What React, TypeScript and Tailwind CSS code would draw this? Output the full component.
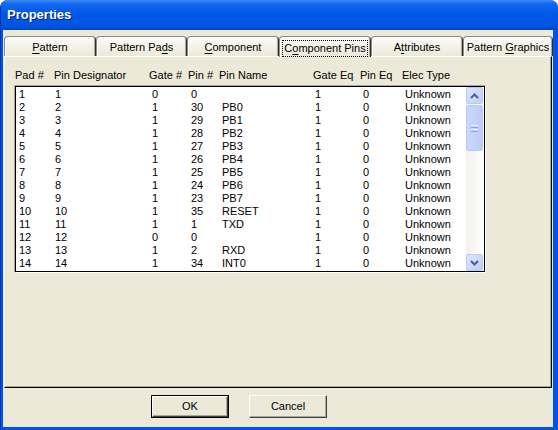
import React from "react";

type Row = [string, string, string, string, string];

const rows: Row[] = [
  ["1", "1", "0", "0", ""],
  ["2", "2", "1", "30", "PB0"],
  ["3", "3", "1", "29", "PB1"],
  ["4", "4", "1", "28", "PB2"],
  ["5", "5", "1", "27", "PB3"],
  ["6", "6", "1", "26", "PB4"],
  ["7", "7", "1", "25", "PB5"],
  ["8", "8", "1", "24", "PB6"],
  ["9", "9", "1", "23", "PB7"],
  ["10", "10", "1", "35", "RESET"],
  ["11", "11", "1", "1", "TXD"],
  ["12", "12", "0", "0", ""],
  ["13", "13", "1", "2", "RXD"],
  ["14", "14", "1", "34", "INT0"],
];

const tabs = [
  { pre: "", key: "P", post: "attern", w: "w-[92px]" },
  { pre: "Pattern Pa", key: "d", post: "s", w: "w-[91px]" },
  { pre: "", key: "C", post: "omponent", w: "w-[92px]" },
  { pre: "C", key: "o", post: "mponent Pins", w: "w-[92px]", active: true },
  { pre: "A", key: "t", post: "tributes", w: "w-[92px]" },
  { pre: "Pattern ", key: "G", post: "raphics", w: "w-[90px]" },
];

const Tab = ({ pre, k, post, w, active }: { pre: string; k: string; post: string; w: string; active?: boolean }) => (
  <div
    className={`${w} h-[20px] flex items-center justify-center pt-[2px] rounded-t-[4px] border border-b-0 border-l-[#8a8a8a] border-t-[#8a8a8a] border-r-[#303030] bg-[linear-gradient(#fbfbf8,#ecE9d8)] shadow-[inset_1px_1px_0_#ffffff,inset_-1px_0_0_#aca899] ${
      active ? "relative z-10 h-[21px] -mb-px" : ""
    }`}
  >
    <span className={active ? "px-[1px] leading-[15px] outline outline-1 outline-dotted outline-black" : ""}>
      {pre}
      <span className="underline underline-offset-2">{k}</span>
      {post}
    </span>
  </div>
);

const Chevron = ({ down }: { down?: boolean }) => (
  <svg width="9" height="6" viewBox="0 0 9 6" className={down ? "rotate-180" : ""}>
    <path d="M1 5 L4.5 1.5 L8 5" fill="none" stroke="#4d6185" strokeWidth="2" />
  </svg>
);

const ScrollBtn = ({ down }: { down?: boolean }) => (
  <div className="h-[17px] w-[17px] flex items-center justify-center rounded-[2px] border border-[#b7cbf5] bg-[linear-gradient(135deg,#dce6fd,#bccdf8)]">
    <Chevron down={down} />
  </div>
);

export default function App() {
  return (
    <div
      className="w-[558px] h-[430px] bg-white text-[11px] text-black"
      style={{ fontFamily: '"Liberation Sans", Arial, sans-serif' }}
    >
      <div className="w-full h-full flex flex-col rounded-t-[8px] overflow-hidden bg-[#0055e5] border-l border-[#0036b0]">
        <div className="h-[30px] flex items-center pl-[6px] bg-[linear-gradient(#3e8ef9_0%,#1468f0_12%,#0058e6_45%,#0054e2_85%,#0045c8_100%)]">
          <span className="text-white font-bold text-[13px] [text-shadow:1px_1px_0_#0a1e6e]">Properties</span>
        </div>
        <div className="flex-1 ml-[2px] mr-[5px] mb-[3px] bg-[#ece9d8] flex flex-col">
          <div className="mt-[6px] ml-[1px] flex items-end h-[20px]">
            {tabs.map((t) => (
              <Tab key={t.w + t.post} pre={t.pre} k={t.key} post={t.post} w={t.w} active={t.active} />
            ))}
          </div>
          <div className="ml-[1px] w-[548px] h-[332px] border border-t-white border-l-white border-r-black border-b-black shadow-[inset_-1px_-1px_0_#aca899] flex flex-col">
            <div className="mt-[12px] ml-[10px] grid grid-cols-[39px_95px_39px_31px_94px_47px_42px_1fr] h-[13px] leading-[13px] w-[460px]">
              <span>Pad #</span>
              <span>Pin Designator</span>
              <span>Gate #</span>
              <span>Pin #</span>
              <span>Pin Name</span>
              <span>Gate Eq</span>
              <span>Pin Eq</span>
              <span>Elec Type</span>
            </div>
            <div className="mt-[3px] ml-[9px] w-[472px] h-[188px] border border-t-[#aca899] border-l-[#aca899] border-r-white border-b-white">
              <div className="w-full h-full border border-black bg-white flex">
                <div className="flex-1 pt-[1px]">
                  {rows.map((r) => (
                    <div
                      key={r[0]}
                      className="grid grid-cols-[36px_97px_39px_31px_93px_48px_42px_1fr] h-[13px] leading-[13px] pl-[3px]"
                    >
                      <span>{r[0]}</span>
                      <span>{r[1]}</span>
                      <span>{r[2]}</span>
                      <span>{r[3]}</span>
                      <span>{r[4]}</span>
                      <span>1</span>
                      <span>0</span>
                      <span>Unknown</span>
                    </div>
                  ))}
                </div>
                <div className="w-[17px] mr-[1px] flex flex-col bg-[linear-gradient(90deg,#f3f1ec,#fefefb)]">
                  <ScrollBtn />
                  <div className="mt-[1px] h-[46px] rounded-[2px] border border-[#b7cbf5] bg-[linear-gradient(90deg,#c9d8fc,#bccdf8)] flex flex-col items-center justify-center gap-[1px]">
                    <div className="w-[7px] h-px bg-[#eef3ff]" />
                    <div className="w-[7px] h-px bg-[#8ca6e4]" />
                    <div className="w-[7px] h-px bg-[#eef3ff]" />
                    <div className="w-[7px] h-px bg-[#8ca6e4]" />
                  </div>
                  <div className="flex-1" />
                  <ScrollBtn down />
                </div>
              </div>
            </div>
          </div>
          <div className="mt-[7px] flex justify-center gap-[20px] pr-[78px]">
            <button className="w-[78px] h-[23px] border border-black bg-[#ece9d8]">
              <div className="w-full h-full border border-t-white border-l-white border-r-[#404040] border-b-[#404040] shadow-[inset_-1px_-1px_0_#aca899] flex items-center justify-center">
                OK
              </div>
            </button>
            <button className="w-[78px] h-[23px] border border-t-white border-l-white border-r-[#404040] border-b-[#404040] shadow-[inset_-1px_-1px_0_#aca899] bg-[#ece9d8] flex items-center justify-center">
              Cancel
            </button>
          </div>
        </div>
      </div>
    </div>
  );
}
